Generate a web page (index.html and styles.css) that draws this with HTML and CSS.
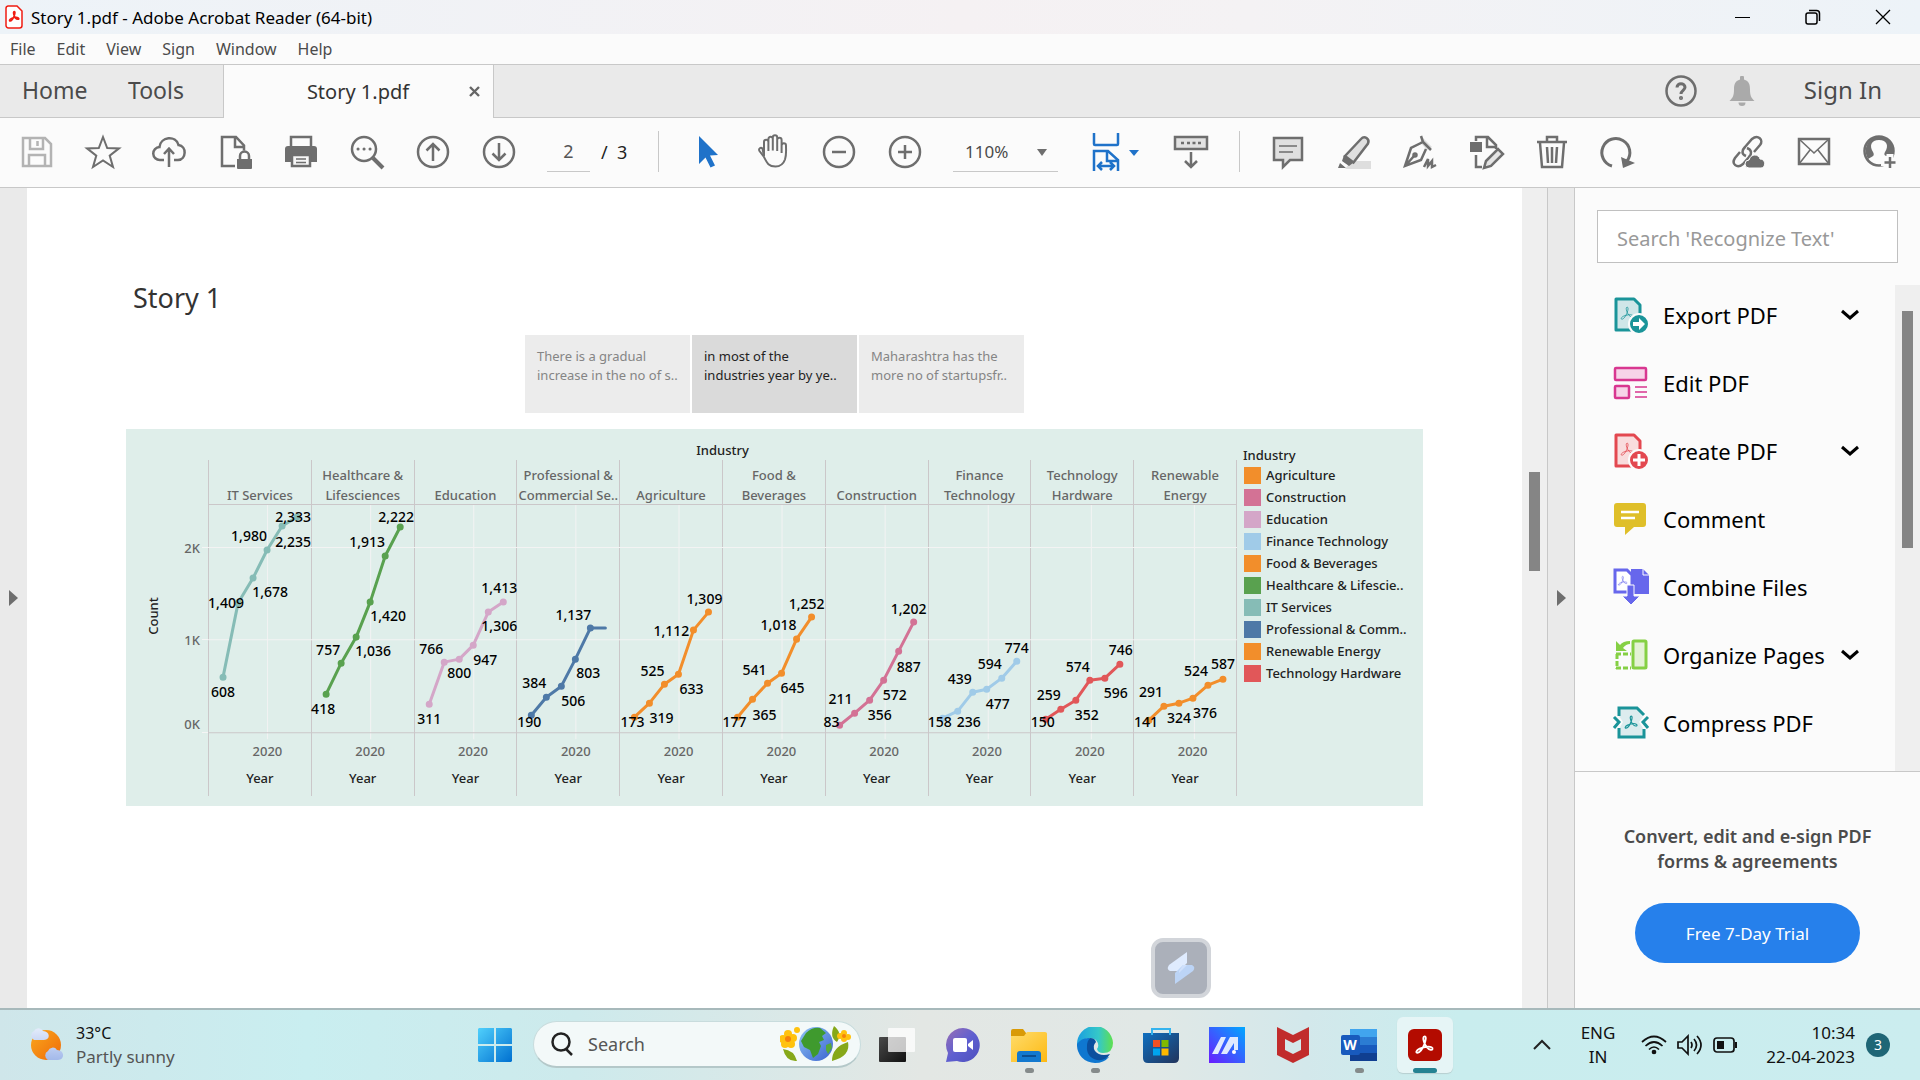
FILE: index.html
```html
<!DOCTYPE html>
<html lang="en">
<head>
<meta charset="utf-8">
<meta name="viewport" content="width=device-width, initial-scale=1">
<title>Story 1.pdf - Adobe Acrobat Reader (64-bit)</title>
<link rel="stylesheet" href="styles.css">
</head>
<body>
<svg class="defs" aria-hidden="true">
  <defs>
    <symbol id="acro" viewBox="0 0 24 24"><path fill="none" stroke="currentColor" stroke-linejoin="round" d="M11.600 4c1.700 0 1.300 3.200 0 6.800-1.500 3.900-4.400 8.400-6.500 8.400-1.900 0-1.300-2.300 2-3.900 3.300-1.500 8.800-2.400 10.900-1.200 1.800 1 .9 2.600-.8 2.300-2.300-.3-5.200-3.900-6.200-7.300-.8-2.700-.9-5.100.6-5.100z"/></symbol>
    <symbol id="chev" viewBox="0 0 20 12"><path d="M2 2l8 7 8-7" fill="none" stroke="currentColor" stroke-width="3"/></symbol>
    <linearGradient id="gWin" x1="0" y1="0" x2="1" y2="1"><stop offset="0" stop-color="#50d0fc"/><stop offset="1" stop-color="#0070d0"/></linearGradient>
    <linearGradient id="gSun" x1="0" y1="0" x2="1" y2="1"><stop offset="0" stop-color="#fba81c"/><stop offset="1" stop-color="#ee6a0a"/></linearGradient>
    <linearGradient id="gCloud" x1="0" y1="0" x2="0" y2="1"><stop offset="0" stop-color="#e4ecfb"/><stop offset="1" stop-color="#a3b9ea"/></linearGradient>
    <linearGradient id="gChat" x1="0" y1="0" x2="1" y2="1"><stop offset="0" stop-color="#9a6fb4"/><stop offset=".5" stop-color="#5f5fd0"/><stop offset="1" stop-color="#4d50bd"/></linearGradient>
    <linearGradient id="gFold" x1="0" y1="0" x2="1" y2="1"><stop offset="0" stop-color="#ffdc6b"/><stop offset="1" stop-color="#fdb913"/></linearGradient>
    <linearGradient id="gEdge" x1="0" y1="0" x2="1" y2="0"><stop offset="0" stop-color="#1b9fe0"/><stop offset=".6" stop-color="#35c8c8"/><stop offset="1" stop-color="#5fe04e"/></linearGradient>
    <linearGradient id="gStore" x1="0" y1="0" x2="1" y2="1"><stop offset="0" stop-color="#0f6fc0"/><stop offset="1" stop-color="#22345c"/></linearGradient>
    <linearGradient id="gArm" x1="0" y1="1" x2="1" y2="0"><stop offset="0" stop-color="#6a1bff"/><stop offset="1" stop-color="#00a8ff"/></linearGradient>
    <linearGradient id="gGlobe" x1="0" y1="0" x2="1" y2="1"><stop offset="0" stop-color="#8fc4f5"/><stop offset="1" stop-color="#3a62cf"/></linearGradient>
    <linearGradient id="gTask" x1="0" y1="0" x2="1" y2="1"><stop offset="0" stop-color="#4a4a4a"/><stop offset="1" stop-color="#111"/></linearGradient>
  </defs>
</svg>

<header class="titlebar">
  <svg class="app-icon" viewBox="0 0 18 24"><path d="M3 1h9l5 5v14.500a2.500 2.500 0 0 1-2.500 2.500h-11a2.500 2.500 0 0 1-2.500-2.500v-17a2.500 2.500 0 0 1 2-2.500z" fill="#fff" stroke="#f01c12" stroke-width="1.500"/><use href="#acro" x="2" y="4" width="15" height="15" color="#f01c12" stroke-width="2.500"/></svg>
  <h1>Story 1.pdf - Adobe Acrobat Reader (64-bit)</h1>
  <div class="win-controls">
    <button aria-label="Minimize"><svg width="16" height="16"><path d="M0 8.500h15" stroke="#000"/></svg></button>
    <button aria-label="Restore"><svg width="16" height="16" fill="none" stroke="#000" stroke-width="1.500"><rect x="1" y="4" width="11" height="11" rx="2"/><path d="M4 1.500h7.500a3 3 0 0 1 3 3v7.500"/></svg></button>
    <button aria-label="Close"><svg width="16" height="16"><path d="M1 1l14 14M15 1l-14 14" stroke="#000" stroke-width="1.300"/></svg></button>
  </div>
</header>

<nav class="menubar">
  <button>File</button><button>Edit</button><button>View</button><button>Sign</button><button>Window</button><button>Help</button>
</nav>

<div class="tabs">
  <button class="tab home">Home</button>
  <button class="tab tools">Tools</button>
  <div class="doc-tab"><span>Story 1.pdf</span><button aria-label="Close tab"><svg width="11" height="11"><path d="M1 1l9 9M10 1l-9 9" stroke="#666" stroke-width="2.400"/></svg></button></div>
  <div class="tabs-right">
    <button aria-label="Help"><svg width="32" height="32" fill="none" stroke="#6e6e6e" stroke-width="2.500"><circle cx="16" cy="16" r="14.500"/><path d="M12 12.500c0-5 8-4.800 8-.2 0 3-4 3.200-4 6.700" stroke-width="3"/><circle cx="16" cy="23" r=".8"/></svg></button>
    <button aria-label="Notifications"><svg width="26" height="30" fill="#aaa"><path d="M11 3.500v-2a2 2 0 0 1 4 0v2c5 1.500 6 5 6 10 0 6 1 8 4.500 11.500h-25c3.500-3.500 4.500-5.500 4.500-11.500 0-5 1-8.500 6-10z"/><path d="M9.500 26.500h7a3.500 3.500 0 0 1-7 0z"/></svg></button>
    <button class="signin">Sign In</button>
  </div>
</div>

<div class="toolbar">
  <button aria-label="Save"><svg class="ic dim" viewBox="0 0 34 34"><path d="M3 3h22l6 6v22h-28z"/><path d="M10 3v11h13v-11M17.500 6v5M9 31v-11h16v11"/></svg></button>
  <button aria-label="Star"><svg class="ic" viewBox="0 0 34 34"><path d="M17 2l4.200 11 11.800.4-9.300 7.200 3.300 11.400-10-6.600-10 6.600 3.300-11.400-9.300-7.200 11.800-.4z" stroke-width="2"/></svg></button>
  <button aria-label="Upload"><svg class="ic" viewBox="0 0 34 34"><path d="M12 25h-4a6.500 6.500 0 0 1-.5-13c1-10.500 16.500-12 19-2 8.500 1 8 14.500-.5 15h-4M17 32v-18M12 19l5-5.500 5 5.500"/></svg></button>
  <button aria-label="Protect"><svg class="ic" viewBox="0 0 34 34"><path d="M17 31h-13v-29h14l8 8.500v5M17 2v10h9"/><path class="fill" d="M19 24h15v9a1 1 0 0 1-1 1h-13a1 1 0 0 1-1-1z"/><path d="M22 24v-3a4.500 4.500 0 0 1 9 0v3"/></svg></button>
  <button aria-label="Print"><svg class="ic" viewBox="0 0 34 34"><path d="M7 12v-10h20v10"/><path class="fill" d="M1 14a3 3 0 0 1 3-3h26a3 3 0 0 1 3 3v13h-32z"/><path d="M8 20h18v11h-18z" fill="#f6f6f6"/><path d="M12 24h10M12 27.500h10" stroke-width="1.500"/></svg></button>
  <button aria-label="Find"><svg class="ic" viewBox="0 0 34 34"><circle cx="14" cy="14" r="12"/><path d="M23 23l10 10" stroke-width="4"/><path d="M8 14h.1M14 14h.1M20 14h.1" stroke-width="3" stroke-linecap="round"/></svg></button>
  <button aria-label="Previous page"><svg class="ic" viewBox="0 0 34 34"><circle cx="17" cy="17" r="15"/><path d="M17 26v-17M10.500 15.500l6.500-6.500 6.500 6.500"/></svg></button>
  <button aria-label="Next page"><svg class="ic" viewBox="0 0 34 34"><circle cx="17" cy="17" r="15"/><path d="M17 8v17M10.500 18.500l6.500 6.500 6.500-6.500"/></svg></button>
  <div class="pager"><input type="text" value="2" aria-label="Page number"><span>/&nbsp; 3</span></div>
  <span class="sep"></span>
  <button aria-label="Select"><svg class="ic" viewBox="0 0 34 34"><path d="M9 1l19 19-8 .5 5 10-4.500 2-5-10-6.500 6.500z" fill="#1f72c9" stroke="none"/></svg></button>
  <button aria-label="Pan"><svg class="ic" viewBox="0 0 34 34"><path d="M8 21.500v-14.500a2.200 2.200 0 0 1 4.400 0v9-12a2.200 2.200 0 0 1 4.400 0v11.500-13a2.200 2.200 0 0 1 4.400 0v13.500-11a2.200 2.200 0 0 1 4.400 0v13-7.500a2.200 2.200 0 0 1 4.400 0c0 6 .6 9-1 14-1.800 5-4.500 7-9.500 7-7 0-8.500-3.500-11.500-9.500l-4.500-6c-1.300-2.500 1.200-4.200 3-2.500z" stroke-width="2"/></svg></button>
  <button aria-label="Zoom out"><svg class="ic" viewBox="0 0 34 34"><circle cx="17" cy="17" r="15"/><path d="M10 17h14"/></svg></button>
  <button aria-label="Zoom in"><svg class="ic" viewBox="0 0 34 34"><circle cx="17" cy="17" r="15"/><path d="M10 17h14M17 10v14"/></svg></button>
  <div class="zoom"><select aria-label="Zoom level"><option>110%</option></select></div>
  <button class="fit" aria-label="Fit width"><svg width="48" height="38" fill="none" stroke="#1f72c9" stroke-width="2.500"><path d="M2 0v11a1 1 0 0 0 1 1h22a1 1 0 0 0 1-1v-11M2 38v-20h14l10 9v11M15 18v10h11M6 33h16M10 29l-4 4 4 4M18 29l4 4-4 4"/><path d="M37 17h10l-5 6z" fill="#1f72c9" stroke="none"/></svg></button>
  <button aria-label="Show toolbar"><svg class="ic" viewBox="0 0 34 34"><path d="M1 2h32v12h-32z" fill="#e2e2e2"/><path d="M7 8h3M13 8h3M18.500 8h3M24 8h3M17 17v15M11 26l6 6 6-6"/></svg></button>
  <span class="sep"></span>
  <button aria-label="Comment"><svg class="ic" viewBox="0 0 34 34"><path d="M3 3h28v22h-12l-7 7v-7h-9z" fill="#e0e0e0"/><path d="M8 11h18M8 17h14" stroke-width="1.500"/></svg></button>
  <button aria-label="Highlight"><svg class="ic" viewBox="0 0 34 34"><path d="M14 26h20v8h-26z" fill="#dedede" stroke="none"/><path d="M8 21l16-17c3.500-4 9 0 7 4.500l-14.500 19z" fill="#e0e0e0"/><path class="fill" d="M7 20l9 8-4 3-7-5zM3 28l6 5h-8z"/></svg></button>
  <button aria-label="Sign document"><svg class="ic" viewBox="0 0 34 34"><path d="M20 3l9 9-5 3-7-8z" fill="#ddd" stroke="none"/><path d="M18 1l2 6 8 8M20 7l-12 6-6 18 16-6 5-11M3 30l8-9M21 32l4-8v7l4-5v6l4-2"/><circle cx="12" cy="20" r="1.500"/></svg></button>
  <button aria-label="Edit page"><svg class="ic" viewBox="0 0 34 34"><path d="M7 6v-4h12l8 8v4M18 2v10h9M7 20v12h6"/><path class="fill" d="M1 7h12v10h-12z"/><path d="M15 33l2-7 12-12 5 5-12 12z" fill="#e4e4e4"/></svg></button>
  <button aria-label="Delete"><svg class="ic" viewBox="0 0 34 34"><path d="M2 7h30M12 6v-4h10v4M5 8l2 24h20l2-24M12 12l1 16M17 12v16M22 12l-1 16"/></svg></button>
  <button aria-label="Rotate"><svg class="ic" viewBox="0 0 34 34"><path d="M11 31a14 14 0 1 1 15-5" stroke-width="3"/><path class="fill" d="M20 22l14 6-12 5z"/></svg></button>
  <div class="share">
    <button aria-label="Share link"><svg class="ic" viewBox="0 0 34 34"><path d="M15 21c-5-2-4-6-1-9l7-8c6-5 12 1 8 6l-6 7M16 13c5 2 5 6 2 9l-6 7c-6 5-12 0-8-6l5-6"/><path class="fill cloud" d="M18 33a4 4 0 0 1 0-8c2-7 10-6 11-1 6 0 6 9 1 9z"/></svg></button>
    <button aria-label="Email"><svg class="ic" viewBox="0 0 34 34"><path d="M2 4h30v25h-30z"/><path d="M2 4l15 14 15-14M2 29l11-14M32 29l-11-14" stroke-width="1.600"/></svg></button>
    <button aria-label="Add person"><svg class="ic" viewBox="0 0 34 34"><circle cx="16" cy="16" r="14.500"/><path class="fill" fill-rule="evenodd" d="M16 1a15 15 0 0 1 14 19h-4l-3 1c-2-1-2-2-1-4 4-6 2-12-6-12s-10 6-6 12c2 4 0 4-5 7a15 15 0 0 1 11-23z"/><path d="M27 19v17M18 27.500h17" stroke="#fbfbfb" stroke-width="7"/><path d="M27 22v11M21.500 27.500h11"/></svg></button>
  </div>
</div>

<main class="workspace">
  <button class="nav-pane" aria-label="Open navigation pane"></button>
  <section class="document">
    <h2>Story 1</h2>
    <div class="points">
      <button>There is a gradual<br>increase in the no of s..</button>
      <button class="on">in most of the<br>industries year by ye..</button>
      <button>Maharashtra has the<br>more no of startupsfr..</button>
    </div>
    <figure class="chart">
      <div class="chart-title">Industry</div>
      <svg class="yaxis" viewBox="0 0 82 235">
        <text x="74" y="49" text-anchor="end">2K</text><text x="74" y="141" text-anchor="end">1K</text><text x="74" y="225" text-anchor="end">0K</text>
        <path d="M76 43.500h6M76 135.500h6M76 228.500h6"/>
        <text class="dark" transform="translate(32 112) rotate(-90)" text-anchor="middle">Count</text>
      </svg>
      <div class="panes">
        <div class="cols">
          <div class="col"><b>IT Services</b><i>2020</i><em>Year</em></div>
          <div class="col"><b>Healthcare &amp;<br>Lifesciences</b><i>2020</i><em>Year</em></div>
          <div class="col"><b>Education</b><i>2020</i><em>Year</em></div>
          <div class="col"><b>Professional &amp;<br>Commercial Se..</b><i>2020</i><em>Year</em></div>
          <div class="col"><b>Agriculture</b><i>2020</i><em>Year</em></div>
          <div class="col"><b>Food &amp;<br>Beverages</b><i>2020</i><em>Year</em></div>
          <div class="col"><b>Construction</b><i>2020</i><em>Year</em></div>
          <div class="col"><b>Finance<br>Technology</b><i>2020</i><em>Year</em></div>
          <div class="col"><b>Technology<br>Hardware</b><i>2020</i><em>Year</em></div>
          <div class="col"><b>Renewable<br>Energy</b><i>2020</i><em>Year</em></div>
        </div>
        <svg class="plot" viewBox="0 0 1028 235">
          <path class="grid" d="M0 43.500h1028M0 135.500h1028M59.500 1v234M162.500 1v234M265.500 1v234M367.500 1v234M470.500 1v234M573.500 1v234M676.500 1v234M779.500 1v234M882.500 1v234M985.500 1v234"/>
          <path class="rule" d="M0 .500h1028M0 228.500h1028"/>
          <g class="it"><path d="M15 173L30 99L45 74L59 46L74 22L89 13"/><path class="dots" d="M15 173h0M30 99h0M45 74h0M59 46h0M74 22h0M89 13h0"/>
            <text x="85" y="18">2,333</text><text x="85" y="43">2,235</text><text x="41" y="37">1,980</text><text x="62" y="93">1,678</text><text x="18" y="104">1,409</text><text x="15" y="193">608</text></g>
          <g class="health" transform="translate(103)"><path d="M15 190L30 159L45 133L59 98L74 52L89 23"/><path class="dots" d="M15 190h0M30 159h0M45 133h0M59 98h0M74 52h0M89 23h0"/>
            <text x="85" y="18">2,222</text><text x="56" y="43">1,913</text><text x="77" y="117">1,420</text><text x="62" y="152">1,036</text><text x="17" y="151">757</text><text x="12" y="210">418</text></g>
          <g class="edu" transform="translate(206)"><path d="M15 200L30 158L45 155L59 141L74 108L89 98"/><path class="dots" d="M15 200h0M30 158h0M45 155h0M59 141h0M74 108h0M89 98h0"/>
            <text x="85" y="89">1,413</text><text x="85" y="127">1,306</text><text x="71" y="161">947</text><text x="45" y="174">800</text><text x="17" y="150">766</text><text x="15" y="220">311</text></g>
          <g class="prof" transform="translate(308)"><path d="M15 211L30 193L45 182L59 155L74 124L89 124"/><path class="dots" d="M15 211h0M30 193h0M45 182h0M59 155h0M74 124h0"/>
            <text x="57" y="116">1,137</text><text x="72" y="174">803</text><text x="57" y="202">506</text><text x="18" y="184">384</text><text x="13" y="223">190</text></g>
          <g class="orange" transform="translate(411)"><path d="M15 213L30 199L45 180L59 170L74 126L89 108"/><path class="dots" d="M15 213h0M30 199h0M45 180h0M59 170h0M74 126h0M89 108h0"/>
            <text x="85" y="100">1,309</text><text x="52" y="132">1,112</text><text x="72" y="190">633</text><text x="33" y="172">525</text><text x="42" y="219">319</text><text x="13" y="223">173</text></g>
          <g class="orange" transform="translate(514)"><path d="M15 213L30 195L45 179L59 169L74 135L89 113"/><path class="dots" d="M15 213h0M30 195h0M45 179h0M59 169h0M74 135h0M89 113h0"/>
            <text x="84" y="105">1,252</text><text x="56" y="126">1,018</text><text x="70" y="189">645</text><text x="32" y="171">541</text><text x="42" y="216">365</text><text x="12" y="223">177</text></g>
          <g class="cons" transform="translate(616)"><path d="M15 221L30 209L45 196L59 176L74 147L89 118"/><path class="dots" d="M15 221h0M30 209h0M45 196h0M59 176h0M74 147h0M89 118h0"/>
            <text x="84" y="110">1,202</text><text x="84" y="168">887</text><text x="70" y="196">572</text><text x="55" y="216">356</text><text x="16" y="200">211</text><text x="7" y="223">83</text></g>
          <g class="fin" transform="translate(719)"><path d="M15 214L30 207L45 188L59 185L74 174L89 157"/><path class="dots" d="M15 214h0M30 207h0M45 188h0M59 185h0M74 174h0M89 157h0"/>
            <text x="89" y="149">774</text><text x="62" y="165">594</text><text x="70" y="205">477</text><text x="32" y="180">439</text><text x="41" y="223">236</text><text x="12" y="223">158</text></g>
          <g class="tech" transform="translate(822)"><path d="M15 215L30 205L45 196L59 176L74 174L89 160"/><path class="dots" d="M15 215h0M30 205h0M45 196h0M59 176h0M74 174h0M89 160h0"/>
            <text x="90" y="151">746</text><text x="47" y="168">574</text><text x="85" y="194">596</text><text x="56" y="216">352</text><text x="18" y="196">259</text><text x="12" y="223">150</text></g>
          <g class="orange" transform="translate(925)"><path d="M15 216L30 202L45 199L59 194L74 181L89 175"/><path class="dots" d="M15 216h0M30 202h0M45 199h0M59 194h0M74 181h0M89 175h0"/>
            <text x="89" y="165">587</text><text x="62" y="172">524</text><text x="71" y="214">376</text><text x="45" y="219">324</text><text x="17" y="193">291</text><text x="12" y="223">141</text></g>
        </svg>
      </div>
      <div class="legend">
        <strong>Industry</strong>
        <ul>
          <li class="orange"><span>Agriculture</span></li>
          <li class="cons"><span>Construction</span></li>
          <li class="edu"><span>Education</span></li>
          <li class="fin"><span>Finance Technology</span></li>
          <li class="orange"><span>Food &amp; Beverages</span></li>
          <li class="health"><span>Healthcare &amp; Lifescie..</span></li>
          <li class="it"><span>IT Services</span></li>
          <li class="prof"><span>Professional &amp; Comm..</span></li>
          <li class="orange"><span>Renewable Energy</span></li>
          <li class="tech"><span>Technology Hardware</span></li>
        </ul>
      </div>
    </figure>
    <button class="floater" aria-label="Quick assistant"><svg width="32" height="36"><path d="M22 2v11l-8 8h-9q-4-2-1-6z" fill="#dfebfe"/><path d="M10 34v-11l8-8h9q4 2 1 6z" fill="#bcd4f6"/><path d="M14 21l4-6h4l-8 8z" fill="#cfe0fb"/></svg></button>
  </section>
  <div class="scroll"><span></span></div>
  <button class="tools-toggle" aria-label="Collapse tools pane"></button>
  <aside class="tools-pane">
    <input type="search" placeholder="Search 'Recognize Text'" aria-label="Search tools">
    <div class="tool-area">
      <ul class="tool-list">
        <li><button><svg viewBox="0 0 36 36" color="#1a9499"><path d="M3 2h18l6 6v25h-24z" fill="#cfe6e8" stroke="currentColor" stroke-width="3" stroke-linejoin="round"/><use href="#acro" x="5" y="7" width="19" height="19"/><circle cx="26" cy="27" r="10" fill="currentColor" stroke="#fbfbfb" stroke-width="2"/><path d="M20 25h6v-4l6 6-6 6v-4h-6z" fill="#fff"/></svg><span>Export PDF</span><svg class="chev"><use href="#chev"/></svg></button></li>
        <li><button><svg viewBox="0 0 36 36" fill="#f7d3e8" stroke="#d83790" stroke-width="2.500"><rect x="2" y="3" width="31" height="12" rx="1"/><rect x="2" y="21" width="14" height="12" rx="1"/><path d="M22 22h12M22 27h12M22 32h12" stroke-width="1.500"/></svg><span>Edit PDF</span></button></li>
        <li><button><svg viewBox="0 0 36 36" color="#e34850"><path d="M3 2h18l6 6v25h-24z" fill="#f9dcdd" stroke="currentColor" stroke-width="3" stroke-linejoin="round"/><use href="#acro" x="5" y="7" width="19" height="19"/><circle cx="26" cy="27" r="10" fill="currentColor" stroke="#fbfbfb" stroke-width="2"/><path d="M26 21v12M20 27h12" stroke="#fff" stroke-width="3"/></svg><span>Create PDF</span><svg class="chev"><use href="#chev"/></svg></button></li>
        <li><button><svg viewBox="0 0 36 36"><path d="M4 2h26a3 3 0 0 1 3 3v18a3 3 0 0 1-3 3h-9l-9 8v-8h-8a3 3 0 0 1-3-3v-18a3 3 0 0 1 3-3z" fill="#dfbf29"/><path d="M8 11h18M8 17h14" stroke="#fff" stroke-width="2.500"/></svg><span>Comment</span></button></li>
        <li><button><svg viewBox="0 0 36 36" color="#6767ec"><path d="M18 0h12l6 6v19h-18z" fill="currentColor"/><path d="M30 0v6h6" fill="none" stroke="#fff"/><path d="M2 1h12l5 5v17h-17z" fill="#fff" stroke="currentColor" stroke-width="3"/><use href="#acro" x="3" y="5" width="14" height="14"/><path d="M14 16h7v11h6l-9 9-9-9h5z" fill="currentColor" stroke="#fbfbfb"/></svg><span>Combine Files</span></button></li>
        <li><button><svg viewBox="0 0 36 36" fill="none" stroke="#85d044"><rect x="20" y="4" width="13" height="27" rx="1" fill="#e4f2d6" stroke-width="3"/><path d="M3 17h15M3 31h15M4 17v15" stroke-width="3" stroke-dasharray="5 2"/><path d="M3 4v10h11l-4-3q3-4 7-4v-3q-7 0-10 4z" fill="#85d044" stroke="none"/></svg><span>Organize Pages</span><svg class="chev"><use href="#chev"/></svg></button></li>
        <li><button><svg viewBox="0 0 36 36" color="#1a9499" fill="none" stroke="currentColor" stroke-width="3"><path d="M6 4h18l6 8-4 5 4 6v8h-24v-7l4-7-4-6z" fill="#dcecee" stroke="none"/><use href="#acro" x="9" y="8" width="19" height="19" stroke-width="1.500"/><path d="M6 11v-8h18l7 7M6 23v9h25v-8M1 12l5 5-5 6M35 12l-5 5 5 6"/></svg><span>Compress PDF</span></button></li>
      </ul>
      <div class="scroll pane-scroll"><span></span></div>
    </div>
    <div class="promo">
      <p>Convert, edit and e-sign PDF<br>forms &amp; agreements</p>
      <button>Free 7-Day Trial</button>
    </div>
  </aside>
</main>

<footer class="taskbar">
  <button class="weather">
    <svg width="38" height="36"><circle cx="18" cy="18" r="15" fill="url(#gSun)"/><path d="M6 13a5 5 0 0 1 0-9 5 5 0 0 1 9 0c7 0 8 9 1 9zM20 33a5 5 0 0 1 0-9 5 5 0 0 1 9-1c8 0 8 10 1 10z" fill="url(#gCloud)"/></svg>
    <span>33°C<br><small>Partly sunny</small></span>
  </button>
  <div class="dock">
    <button class="start" aria-label="Start"><svg width="36" height="36" fill="url(#gWin)"><path d="M2 1h15v16h-16v-15zM19 1h15l1 1v15h-16zM1 19h16v16h-15l-1-1zM19 19h16v15l-1 1h-15z"/></svg></button>
    <label class="search"><svg width="24" height="24" fill="none" stroke="#222" stroke-width="2.500"><circle cx="11" cy="10" r="8.500"/><path d="M16 17l6 6"/></svg><input type="text" placeholder="Search" aria-label="Search">
      <svg width="72" height="38"><circle cx="36" cy="19" r="17" fill="url(#gGlobe)"/><path d="M26 8q6-6 14-5l6 5-4 3 2 4-5 2 2 4-3 8-5 4-3-8-6-3-3-6z" fill="#3f9a2e"/><path d="M46 20l5-2 1 5-4 6-2-4z" fill="#56a83a"/><path d="M3 24q11 1 14 12-11 1-14-12zM68 17q3 14-16 19 0-14 16-19zM54 1q9 7 3 16-8-5-3-16z" fill="#86a819"/><g fill="#ffc20e"><circle cx="8" cy="9" r="4"/><circle cx="3" cy="14" r="4"/><circle cx="13" cy="13" r="4"/><circle cx="5" cy="19" r="4"/><circle cx="11" cy="19" r="4"/><circle cx="64" cy="8" r="3"/><circle cx="60" cy="11" r="3"/><circle cx="68" cy="12" r="3"/><circle cx="64" cy="14" r="3"/><circle cx="17" cy="5" r="3"/></g><circle cx="8" cy="14" r="3" fill="#f5820b"/><circle cx="64" cy="11" r="2" fill="#f5820b"/></svg>
    </label>
    <button aria-label="Task view"><svg width="36" height="36"><rect y="10" width="27" height="25" rx="1" fill="url(#gTask)"/><rect x="9" y="1" width="27" height="24" rx="1" fill="#fff" fill-opacity=".75"/></svg></button>
    <button aria-label="Chat"><svg width="36" height="36"><path d="M18 1a17 17 0 1 1-6 33l-11 1 2-9a17 17 0 0 1 15-25z" fill="url(#gChat)"/><rect x="8" y="11" width="14" height="14" rx="2" fill="#fff"/><path d="M23 17l5-4v10l-5-4z" fill="#fff"/></svg></button>
    <button class="open" aria-label="File Explorer"><svg width="36" height="36"><path d="M0 4q0-2 2-2h10l3 4h19q2 0 2 2v10h-36z" fill="#d99a06"/><path d="M0 9h13l3-4h18q2 0 2 2v28h-36z" fill="url(#gFold)"/><path d="M6 35v-8q0-3 3-3h18q3 0 3 3v8z" fill="#1379cf"/><path d="M11 29h14" stroke="#0b4f92" stroke-width="2"/></svg></button>
    <button class="open" aria-label="Edge"><svg width="36" height="36"><path d="M0 18a18 18 0 0 1 36-2q0 10-10 10-5 0-6-4 3-4-1-9-9-6-19 5z" fill="url(#gEdge)"/><path d="M0 17q5-7 13-6-4 11 3 17 6 5 16 2-5 6-14 6a18 18 0 0 1-18-19z" fill="#0f77d0"/><path d="M13 11q5 0 6 4-4 4-1 9 5 6 15 3-4 7-13 6-11-3-10-14 0-5 3-8z" fill="#0b4f9e"/></svg></button>
    <button aria-label="Microsoft Store"><svg width="36" height="36"><path d="M0 6h36v25q0 5-5 5h-26q-5 0-5-5z" fill="url(#gStore)"/><path d="M9 8v-6h18v6" fill="none" stroke="#35b3ee" stroke-width="2"/><path d="M10 13h7v7h-7z" fill="#f25022"/><path d="M18.500 13h7v7h-7z" fill="#7fba00"/><path d="M10 21.500h7v7h-7z" fill="#00a4ef"/><path d="M18.500 21.500h7v7h-7z" fill="#ffb900"/></svg></button>
    <button aria-label="Armoury"><svg width="36" height="36"><path d="M0 0h36v36h-36z" fill="url(#gArm)"/><path d="M3 27l9-17h5l-8 17zM12 27l9-17h8v13h-4v-7l-7 11z" fill="#dfe9ff"/><circle cx="25" cy="25" r="2" fill="#fff"/></svg></button>
    <button aria-label="McAfee"><svg width="36" height="38"><path d="M2 1l16 8 16-8v28l-16 8-16-8zM10 13v11l8 4 8-4v-11l-8 4z" fill="#c12c2c" fill-rule="evenodd"/></svg></button>
    <button class="open" aria-label="Word"><svg width="36" height="36"><path d="M9 2h27v9h-27z" fill="#41a5ee"/><path d="M9 10h27v8h-27z" fill="#2b7cd3"/><path d="M9 18h27v8h-27z" fill="#185abd"/><path d="M9 26h27v8h-27z" fill="#103f91"/><rect y="8" width="19" height="20" rx="2" fill="#185abd"/><text x="9" y="23" font-size="14" font-weight="700" fill="#fff" text-anchor="middle">W</text></svg></button>
    <button class="open active" aria-label="Adobe Acrobat"><svg width="36" height="36"><rect x="1" y="2" width="34" height="32" rx="6" fill="#b30b00"/><use href="#acro" x="5" y="5" width="26" height="26" color="#fff" stroke-width="1.700"/></svg></button>
  </div>
  <div class="tray">
    <button aria-label="Show hidden icons"><svg width="18" height="12"><path d="M1 10l8-8 8 8" fill="none" stroke="#222" stroke-width="2"/></svg></button>
    <button class="lang">ENG<br>IN</button>
    <button class="status" aria-label="Network, volume, battery">
      <svg width="26" height="22" fill="none" stroke="#111" stroke-width="1.700"><path d="M1 8q12-11 24 0M4.500 12q8.500-8 17 0M8 15.500q5-5 10 0"/><circle cx="13" cy="18" r="1.500" fill="#111"/></svg>
      <svg width="26" height="22" fill="none" stroke="#111" stroke-width="1.700"><path d="M1 8h4l6-6v18l-6-6h-4zM14 8q2 3 0 6M17 5q5 6 0 12M20 2q8 9 0 18"/></svg>
      <svg width="26" height="22"><rect x="1" y="4" width="20" height="14" rx="3" fill="none" stroke="#111" stroke-width="1.700"/><path d="M4 7h7v8h-7zM22 8h2v6h-2z" fill="#111"/></svg>
    </button>
    <button class="clock">10:34<br>22-04-2023</button>
    <span class="badge">3</span>
  </div>
</footer>
</body>
</html>
```
FILE: styles.css
```css
* { box-sizing: border-box; }
body {
  margin: 0;
  height: 100vh;
  display: flex;
  flex-direction: column;
  font-family: "Noto Sans", "Open Sans", sans-serif;
  font-size: 16px;
  color: #4b4b4b;
  background: #fbfbfb;
  overflow: hidden;
}
button, input, select { font: inherit; color: inherit; border: 0; background: none; padding: 0; margin: 0; }
button { cursor: pointer; }
svg { display: block; flex: none; }
h1, h2, p, ul, figure { margin: 0; padding: 0; }
h1, h2 { font-weight: 400; }
ul { list-style: none; }
.defs { position: absolute; width: 0; height: 0; }

.titlebar {
  display: flex;
  align-items: center;
  height: 34px;
  padding-left: 5px;
  gap: 8px;
  background: linear-gradient(90deg, #edf3f8, #f5f1f3 50%, #f4f2f4 65%, #edf3f8);
}
.app-icon { width: 18px; height: 24px; }
.titlebar h1 { font-size: 17px; color: #000; }
.win-controls { display: flex; margin-left: auto; margin-right: 2px; }
.win-controls button { width: 70px; height: 34px; display: grid; place-items: center; }

.menubar { display: flex; gap: 21px; height: 31px; padding: 0 10px; align-items: center; border-bottom: 1px solid #c8c8c8; }
.menubar button { font-size: 16px; line-height: 30px; }

.tabs { display: flex; height: 53px; background: #eaeaea; }
.tab { font-size: 23px; line-height: 50px; padding-bottom: 2px; border-bottom: 1px solid #c8c8c8; text-align: left; }
.home { width: 128px; padding-left: 22px; }
.tools { width: 95px; }
.doc-tab { display: flex; width: 271px; align-items: center; background: #fbfbfb; border: 1px solid #c8c8c8; border-width: 0 1px; color: #333; font-size: 20px; }
.doc-tab span { flex: 1; padding-left: 36px; text-align: center; }
.doc-tab button { padding: 0 13px; }
.tabs-right { flex: 1; display: flex; align-items: center; justify-content: flex-end; gap: 32px; padding-right: 38px; border-bottom: 1px solid #c8c8c8; }
.signin { font-size: 24px; line-height: 48px; padding: 0 0 2px 17px; }

.toolbar { display: flex; align-items: center; height: 70px; padding: 0 7px 2px 4px; border-bottom: 1px solid #c8c8c8; }
.toolbar button { width: 66px; height: 60px; display: grid; place-items: center; flex: none; }
.ic { width: 34px; height: 34px; fill: none; stroke: #6e6e6e; stroke-width: 2.5; overflow: visible; }
.ic .fill { fill: #6e6e6e; stroke: none; }
.ic .cloud { stroke: #fbfbfb; stroke-width: 1; }
.dim { stroke: #b3b3b3; }
.pager { display: flex; align-items: center; width: 111px; margin-left: 15px; gap: 11px; font-size: 18px; color: #222; }
.pager input { width: 43px; height: 40px; text-align: center; border-bottom: 1px solid #c8c8c8; color: #555; }
.sep { width: 1px; height: 41px; background: #c8c8c8; margin-right: 15px; }
.zoom { position: relative; margin: 0 21px 0 15px; }
.zoom select { appearance: none; width: 105px; height: 40px; padding-left: 12px; font-size: 17px; border-bottom: 1px solid #c8c8c8; }
.zoom::after { content: ""; position: absolute; right: 11px; top: 17px; border: 5px solid transparent; border-top: 7px solid #6e6e6e; border-bottom: 0; }
.toolbar .fit { width: 74px; }
.toolbar .fit + button { margin-left: 5px; }
.fit + button + .sep { margin-left: 15px; }
.share { display: flex; margin-left: auto; }

.workspace { flex: 1; display: flex; min-height: 0; }
.nav-pane, .tools-toggle { width: 27px; background: #eaeaea; display: grid; place-items: center; }
.nav-pane::before, .tools-toggle::before { content: ""; border: 8px solid transparent; border-left: 9px solid #6e6e6e; border-right: 0; }
.tools-toggle { border: 1px solid #c8c8c8; border-width: 0 1px; width: 28px; }
.document { position: relative; flex: 1; padding: 92px 99px 0; background: #fff; min-width: 0; }
.document h2 { font-size: 27px; line-height: 36px; padding-left: 7px; color: #333; }
.points { display: flex; justify-content: center; gap: 2px; margin-top: 19px; }
.points button { width: 165px; height: 78px; padding: 0 12px 16px; text-align: left; font-size: 13px; line-height: 19px; background: #ececec; color: #858585; white-space: nowrap; }
.points .on { background: #dadada; color: #222; }

.chart { display: grid; grid-template-columns: 82px minmax(0, 1fr) 186px; margin-top: 16px; padding: 12px 0 10px; background: #dfeeea; font-size: 13px; font-weight: 500; color: #666; }
.chart-title { grid-column: 2; height: 19px; line-height: 18px; text-align: center; color: #222; }
.yaxis { grid-column: 1; grid-row: 2; width: 82px; margin-top: 44px; fill: #666; }
.yaxis path { stroke: #f5f5f5; stroke-width: 1; }
.yaxis .dark { fill: #222; }
.panes { grid-column: 2; grid-row: 2; display: grid; grid-template-columns: minmax(0, 1fr); height: 336px; }
.cols { grid-area: 1 / 1; display: grid; grid-template-columns: repeat(10, minmax(0, 1fr)); border-right: 1px solid #cbc7c9; }
.col { display: flex; flex-direction: column; border-left: 1px solid #cbc7c9; text-align: center; white-space: nowrap; line-height: 20px; }
.col b { display: flex; flex-direction: column; justify-content: flex-end; height: 45px; font-weight: 500; margin: 0 -4px; }
.col i { font-style: normal; margin: auto 0 7px; padding-left: 15px; }
.col em { font-style: normal; color: #222; margin-bottom: 8px; }
.plot { grid-area: 1 / 1; width: 100%; margin-top: 44px; fill: none; overflow: visible; }
.plot g path { stroke: currentColor; stroke-width: 3; stroke-linejoin: round; stroke-linecap: round; }
.plot g .dots { stroke-width: 7; }
.plot text { fill: #000; font-size: 14px; text-anchor: middle; }
.grid { stroke: #f3f3f3; stroke-width: 1; }
.rule { stroke: #cbc7c9; }
.it { color: #86bcb6; }
.health { color: #59a14f; }
.edu { color: #d4a6c8; }
.prof { color: #4e79a7; }
.orange { color: #f28e2b; }
.cons { color: #d37295; }
.fin { color: #a0cbe8; }
.tech { color: #e15759; }
.legend { grid-column: 3; grid-row: 1 / 3; padding: 5px 0 0 6px; color: #222; white-space: nowrap; }
.legend strong { display: block; font-weight: 500; line-height: 18px; height: 18px; }
.legend li { display: flex; align-items: center; gap: 5px; height: 22px; padding-left: 1px; }
.legend li::before { content: ""; width: 17px; height: 17px; background: currentColor; }
.legend span { color: #222; }

.floater { position: absolute; right: 311px; bottom: 10px; width: 60px; height: 60px; display: grid; place-items: center; background: #abb0ba; border: 4px solid #d2d5da; border-radius: 12px; }

.scroll { width: 25px; background: #efefef; padding: 284px 7px 0; }
.scroll span { display: block; height: 99px; background: #858585; }
.tools-pane { width: 345px; display: flex; flex-direction: column; padding-top: 22px; color: #000; }
.tools-pane > input { height: 53px; margin: 0 22px 22px; padding: 4px 19px 0; border: 1px solid #c0c0c0; background: #fff; font-size: 20px; }
.tools-pane > input::placeholder { color: #999; }
.tool-area { display: flex; justify-content: space-between; height: 487px; border-bottom: 1px solid #c8c8c8; }
.tool-list { flex: 1; }
.tool-list button { display: flex; align-items: center; width: 100%; height: 68px; padding: 0 35px 9px 38px; text-align: left; }
.tool-list svg { width: 36px; height: 36px; margin-right: 14px; overflow: visible; }
.tool-list span { flex: 1; font-size: 22px; white-space: nowrap; }
.tool-list .chev { width: 20px; height: 12px; margin: 0; }
.pane-scroll { padding-top: 26px; }
.pane-scroll span { height: 237px; }
.promo { flex: 1; text-align: center; padding: 52px 0 0; }
.promo p { font-size: 18px; font-weight: 600; line-height: 25px; color: #4b4b4b; }
.promo button { width: 225px; height: 60px; margin-top: 29px; border-radius: 30px; background: #2680eb; color: #fff; font-size: 17px; }

.taskbar { display: flex; align-items: center; position: relative; height: 72px; border-top: 2px solid #a7b9bb; background: linear-gradient(90deg, #cfe6ea, #c9eef0 16%, #cdeaec 30%, #e3e7e4 48%, #e1e8e6 60%, #d3e8eb 68%, #c9edee 76%, #cbedef); color: #111; padding-bottom: 1px; }
.weather { display: flex; gap: 10px; padding-left: 28px; text-align: left; font-size: 16px; line-height: 24px; align-items: center; flex: 1; }
.weather small { font-size: 17px; color: #555; }
.dock { display: flex; align-items: center; margin-left: 7px; }
.dock > button { position: relative; width: 56px; height: 56px; margin: 0 5px; display: grid; place-items: center; border-radius: 6px; }
.dock .start { margin: 0 10px 0 0; }
.search { display: flex; align-items: center; width: 328px; height: 47px; margin-right: 3px; padding: 0 8px 0 16px; gap: 14px; border-radius: 24px; background: #f3f9f9; border: 1px solid #c8dcdd; border-bottom: 2px solid #b4c8c9; }
.search input { flex: 1; min-width: 0; font-size: 18px; }
.search input::placeholder { color: #555; opacity: 1; }
.open::after { content: ""; position: absolute; left: 24px; bottom: 0; width: 9px; height: 5px; border-radius: 3px; background: #858b8b; }
.dock .active { background: #e6f5f6; box-shadow: 0 1px 1px #b7cfd0; }
.active::after { left: 16px; width: 24px; background: #258292; }
.tray { flex: 1; display: flex; align-items: center; justify-content: flex-end; font-size: 17px; line-height: 24px; padding-right: 30px; }
.lang { width: 60px; margin: 0 13px 0 17px; }
.status { display: flex; gap: 10px; margin-right: 18px; }
.tray .clock { text-align: right; min-width: 98px; }
.badge { width: 24px; height: 24px; margin-left: 11px; border-radius: 50%; background: #1f6676; color: #fff; font-size: 14px; text-align: center; }
```
